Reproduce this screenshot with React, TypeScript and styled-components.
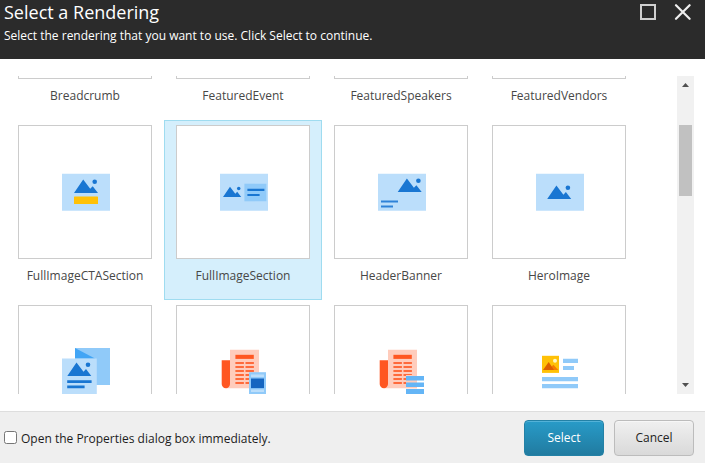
import React from "react";
import styled, { createGlobalStyle, css } from "styled-components";

const GlobalStyle = createGlobalStyle`
  * { box-sizing: border-box; }
  body { margin: 0; background: #fff; overflow: hidden; }
  body, button { font-family: "Open Sans", "Noto Sans", sans-serif; font-size: 12px; }
`;

const Dialog = styled.div`
  display: flex;
  flex-direction: column;
  width: 705px;
  height: 463px;
  background: #fff;
  color: #474747;
`;

const Header = styled.header`
  display: flex;
  justify-content: space-between;
  height: 59px;
  padding: 0 14px 0 4px;
  background: #2b2b2b;
  color: #fff;
`;

const Title = styled.h1`
  margin: 0;
  font-size: 18px;
  line-height: 24px;
  font-weight: 400;
`;

const Subtitle = styled.p`
  margin: 4px 0 0;
  line-height: 16px;
`;

const WindowControls = styled.div`
  display: flex;
  gap: 18px;
  padding-top: 4px;
`;

const Body = styled.main`
  display: flex;
  justify-content: space-between;
  height: 318px;
  margin: 17px 11px 17px 6px;
`;

const Viewport = styled.div`
  height: 318px;
  overflow: hidden;
`;

const Grid = styled.div`
  display: grid;
  grid-template-columns: repeat(4, 158px);
  grid-auto-rows: 180px;
  margin-top: -136px;
`;

const Tile = styled.div<{ $selected?: boolean }>`
  display: flex;
  flex-direction: column;
  align-items: center;
  padding: 4px 11px;
  border: 1px solid transparent;
  ${(p) => p.$selected && css`
    background: #d5effc;
    border-color: #9fdcf0;
  `}
`;

const Thumb = styled.div`
  display: flex;
  align-items: center;
  justify-content: center;
  width: 134px;
  height: 134px;
  padding-left: 2px;
  border: 1px solid #ccc;
  background: #fff;
`;

const Label = styled.span`
  margin-top: 9px;
  line-height: 16px;
  white-space: nowrap;
`;

const ScrollTrack = styled.div`
  display: flex;
  flex-direction: column;
  align-items: center;
  width: 17px;
  height: 318px;
  background: #f1f1f1;
`;

const ScrollThumb = styled.div`
  width: 13px;
  height: 71px;
  margin: 32px 0 auto;
  background: #c1c1c1;
`;

const Footer = styled.footer`
  display: flex;
  align-items: center;
  justify-content: space-between;
  height: 52px;
  padding: 0 11px 0 4px;
  border-top: 1px solid #dedede;
  background: #efefef;
`;

const CheckLabel = styled.label`
  display: flex;
  align-items: center;
  gap: 4px;
  color: #1c1c1c;
`;

const CheckText = styled.span`
  padding-top: 2px;
  line-height: 16px;
`;

const Checkbox = styled.input`
  appearance: none;
  width: 13px;
  height: 13px;
  margin: 0;
  border: 1px solid #767676;
  border-radius: 2.5px;
  background: #fff;
`;

const Actions = styled.div`
  display: flex;
  gap: 10px;
`;

const Button = styled.button<{ $primary?: boolean }>`
  width: 80px;
  height: 36px;
  padding: 0;
  border: 1px solid ${(p) => (p.$primary ? "#2381a6" : "#bcbcbc")};
  border-radius: 4px;
  color: ${(p) => (p.$primary ? "#fff" : "#222")};
  background: ${(p) => (p.$primary
    ? "linear-gradient(#289bc8, #217ba0)"
    : "linear-gradient(#f0f0f0, #d9d9d9)")};
  box-shadow: inset 0 1px ${(p) => (p.$primary ? "#53b2d8" : "#f7f7f7")};
`;

const Icon = styled.svg.attrs({ width: 48, height: 48, viewBox: "0 0 48 48" })`
  display: block;
`;

const Mountains = ({ x = 0, y = 0, scale = 1 }: { x?: number; y?: number; scale?: number }) => (
  <g transform={`translate(${x} ${y}) scale(${scale})`} fill="#1976d2">
    <path d="M0 13.4 9.2 0l7 9.2 2.5-2.6L24 13.4Z" />
    <circle cx="20.7" cy="2.2" r="2.3" />
  </g>
);

const Backdrop = () => <path fill="#bbdefb" d="M0 5.8h48v37H0z" />;

const CtaIcon = () => (
  <Icon>
    <Backdrop />
    <Mountains x={12} y={11.6} />
    <rect x="12" y="28.4" width="24" height="7.6" rx=".6" fill="#ffc107" />
  </Icon>
);

const SectionIcon = () => (
  <Icon>
    <Backdrop />
    <Mountains x={3} y={18.8} scale={0.76} />
    <path fill="#90caf9" d="M24.4 15.7h22v17.6h-22z" />
    <path fill="#1976d2" d="M27.4 20.8h17v2.1h-17zm0 5.1h12.2V28H27.4z" />
  </Icon>
);

const BannerIcon = () => (
  <Icon>
    <Backdrop />
    <Mountains x={19.7} y={10.6} />
    <path fill="#2e82d8" d="M3 32.5h17v2H3zm0 5.1h12v2H3z" />
  </Icon>
);

const HeroIcon = () => (
  <Icon>
    <Backdrop />
    <Mountains x={11.2} y={17.5} />
  </Icon>
);

const PagesIcon = () => (
  <Icon>
    <path fill="#90caf9" d="M13 0h35v37H13z" />
    <path fill="#42a5f5" d="M13 0 33 10.4H13z" />
    <path fill="#bbdefb" d="M0 10.4h34.8V46H0z" />
    <Mountains x={5.3} y={14.5} />
    <path fill="#1976d2" d="M5.2 32.2h24.4v2.7H5.2zm0 5.3h17.4v2.7H5.2z" />
  </Icon>
);

const Newspaper = () => (
  <>
    <path fill="#ffccbc" d="M10 1.8h29v38.5H6V36h4z" />
    <path fill="#ff5722" d="M1.7 12.2H10V36a4.1 4.1 0 0 1-8.3 0z" />
    <path fill="#ff5722" d="M15.4 6.8h18.4v4.1H15.4z" />
    {[14, 18, 22, 26, 30, 34].map((y) => (
      <path key={y} fill="#ff6a3b" d={`M15.4 ${y}h8.5v2.1h-8.5zm10.1 0h8.4v2.1h-8.4z`} />
    ))}
  </>
);

const NewsPhotoIcon = () => (
  <Icon>
    <Newspaper />
    <path fill="#90caf9" d="M29 24.2h17V46H29z" />
    <path fill="#bbdefb" d="M31 26.6h13V29H31zm0 14.8h13V44H31z" />
    <path fill="#1565c0" d="M31 30.5h13v9.6H31z" />
  </Icon>
);

const NewsListIcon = () => (
  <Icon>
    <Newspaper />
    <path fill="#ffccbc" d="M28 27h11v13.3H28z" />
    <path fill="#64b5f6" d="M28 28.1h18v4.5H28zm0 6.5h18V39H28zm0 6.5h18V46H28z" />
  </Icon>
);

const TeaserIcon = () => (
  <Icon>
    <path fill="#ffc107" d="M6 7.8h17v17.1H6z" />
    <circle cx="19" cy="12.7" r="2" fill="#fff9c4" />
    <path fill="#f57c00" d="m12.3 22 5.1-5.2 4.9 5.2z" />
    <path fill="#dd5f00" d="m7 22 5.7-8.1 5.3 8.1z" />
    <path fill="#90caf9" d="M27 10.8h15V15H27zm0 7.2h11v4H27zM6 29h36v4.2H6zm0 7h36v4.2H6z" />
  </Icon>
);

const renderings: { name: string; icon?: React.FC; selected?: boolean }[] = [
  { name: "Breadcrumb" },
  { name: "FeaturedEvent" },
  { name: "FeaturedSpeakers" },
  { name: "FeaturedVendors" },
  { name: "FullImageCTASection", icon: CtaIcon },
  { name: "FullImageSection", icon: SectionIcon, selected: true },
  { name: "HeaderBanner", icon: BannerIcon },
  { name: "HeroImage", icon: HeroIcon },
  { name: "", icon: PagesIcon },
  { name: "", icon: NewsPhotoIcon },
  { name: "", icon: NewsListIcon },
  { name: "", icon: TeaserIcon },
];

export default function App() {
  return (
    <>
      <GlobalStyle />
      <Dialog>
        <Header>
          <div>
            <Title>Select a Rendering</Title>
            <Subtitle>Select the rendering that you want to use. Click Select to continue.</Subtitle>
          </div>
          <WindowControls>
            <svg width="16" height="16" viewBox="0 0 16 16">
              <rect x="1" y="1" width="14" height="14" fill="none" stroke="#d0d0d0" strokeWidth="2" />
            </svg>
            <svg width="17" height="16" viewBox="0 0 17 16">
              <path d="m2 1.2 13.6 13.6m0-13.6L2 14.8" stroke="#eee" strokeWidth="2.2" strokeLinecap="round" />
            </svg>
          </WindowControls>
        </Header>
        <Body>
          <Viewport>
            <Grid>
              {renderings.map(({ name, icon: Drawing, selected }, i) => (
                <Tile key={i} $selected={selected}>
                  <Thumb>{Drawing && <Drawing />}</Thumb>
                  <Label>{name}</Label>
                </Tile>
              ))}
            </Grid>
          </Viewport>
          <ScrollTrack>
            <svg width="17" height="17" viewBox="0 0 17 17">
              <path d="M5 11h7L8.5 7z" fill="#505050" />
            </svg>
            <ScrollThumb />
            <svg width="17" height="17" viewBox="0 0 17 17">
              <path d="M5 6h7l-3.5 4z" fill="#505050" />
            </svg>
          </ScrollTrack>
        </Body>
        <Footer>
          <CheckLabel>
            <Checkbox type="checkbox" />
            <CheckText>Open the Properties dialog box immediately.</CheckText>
          </CheckLabel>
          <Actions>
            <Button $primary>Select</Button>
            <Button>Cancel</Button>
          </Actions>
        </Footer>
      </Dialog>
    </>
  );
}
